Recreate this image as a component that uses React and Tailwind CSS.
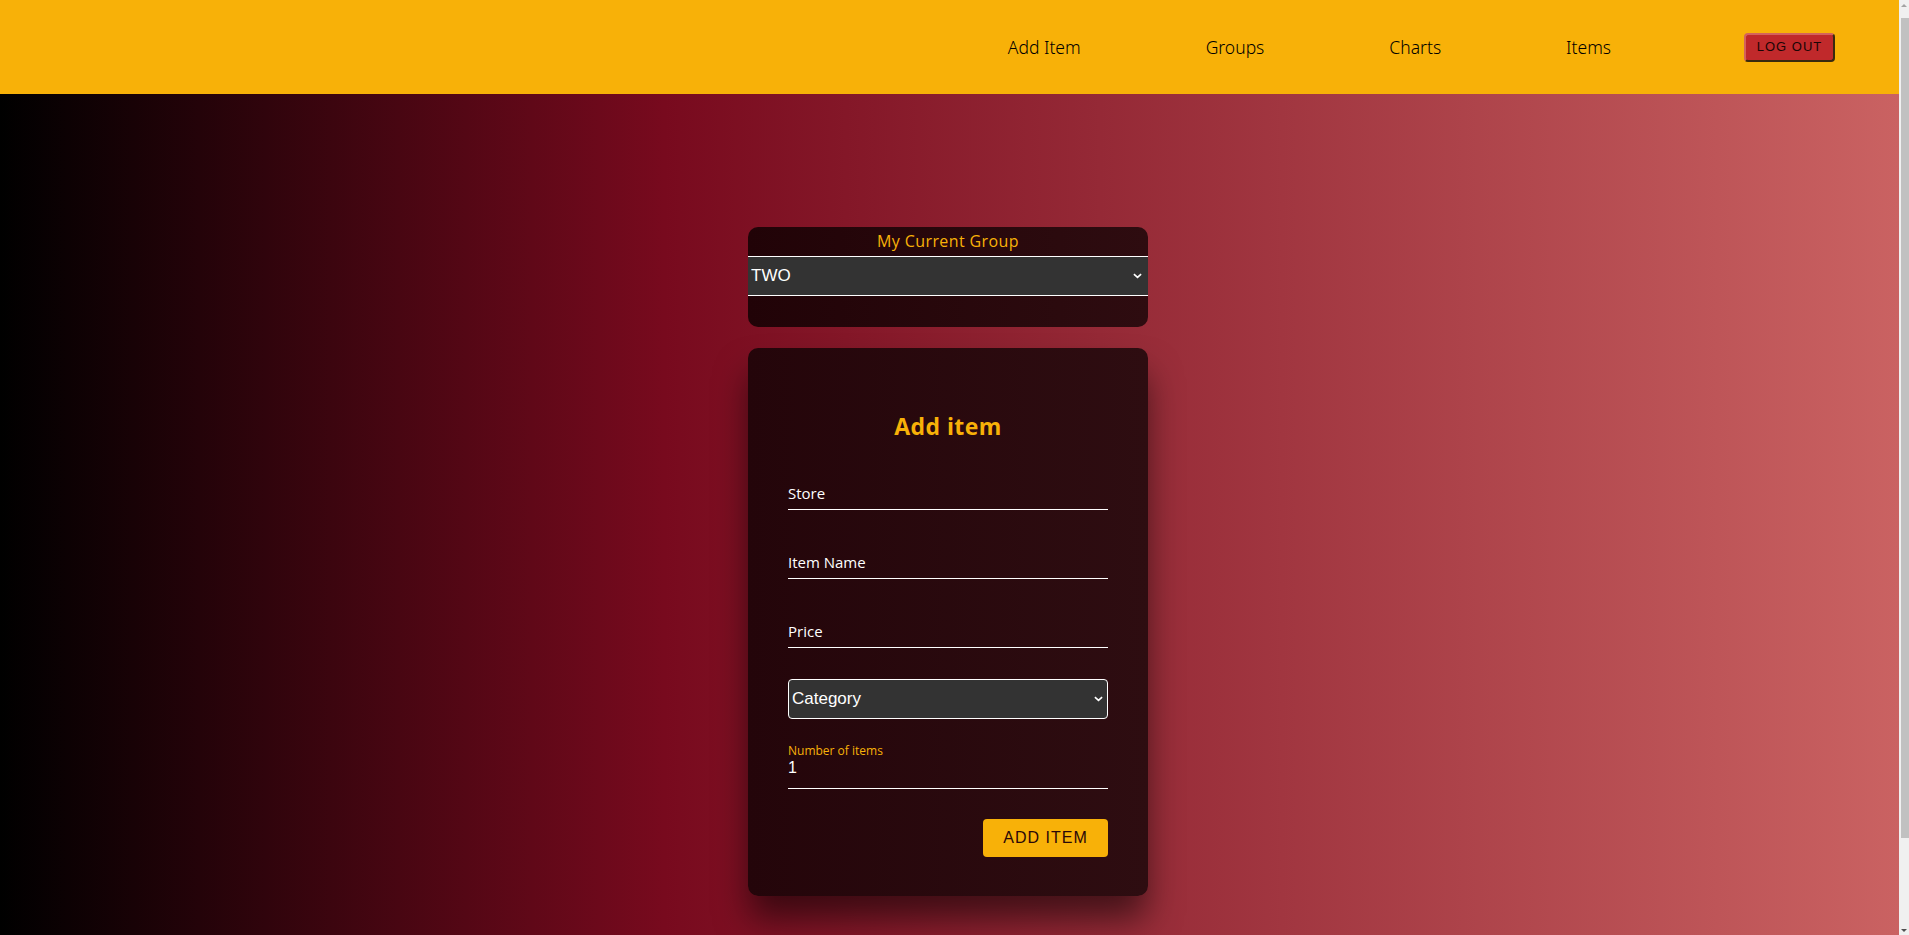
import { useState } from 'react';

const navLinks = ['Add Item', 'Groups', 'Charts', 'Items'];

function Chevron({ className }) {
  return (
    <svg viewBox="0 0 10 6" className={className} fill="none" stroke="currentColor" strokeWidth="1.8">
      <path d="M1 1l4 3.6L9 1" />
    </svg>
  );
}

function LineInput({ placeholder }) {
  return (
    <input
      placeholder={placeholder}
      className="block h-[34px] w-full border-b border-white bg-transparent text-[15px] text-white outline-none placeholder:text-white"
    />
  );
}

export default function App() {
  const [group, setGroup] = useState('TWO');
  const [count, setCount] = useState('1');

  return (
    <div className="flex h-screen overflow-hidden font-['Open_Sans','Noto_Sans',sans-serif]">
      <div className="flex min-w-0 flex-1 flex-col bg-[linear-gradient(to_right,#000000_0%,#780a1e_35%,#ca6262_100%)]">
        <header className="flex h-[94px] shrink-0 items-center justify-end gap-[125px] bg-[#f8b108] pr-[64px]">
          {navLinks.map((link) => (
            <a key={link} href="#" className="pt-[1px] font-['Noto_Sans',sans-serif] text-[17.5px] font-light text-black">
              {link}
            </a>
          ))}
          <button className="ml-2 h-[29px] w-[91px] rounded-[4px] border-2 border-t-[#d4625c] border-l-[#d4625c] border-r-[#3a2a0e] border-b-[#3a2a0e] bg-[#c0292b] font-['Liberation_Sans',Arial,sans-serif] text-[13px] tracking-[1px] text-[#1a0505]">
            LOG OUT
          </button>
        </header>

        <main className="flex flex-col items-center pr-[3px]">
          <section className="mt-[133px] w-[400px] rounded-[10px] bg-[linear-gradient(to_right,#210307,#2e0c10)] pb-[31px]">
            <h2 className="h-[29px] text-center text-[16px] leading-[29px] tracking-[0.4px] text-[#f8b108]">
              My Current Group
            </h2>
            <div className="relative">
              <select
                value={group}
                onChange={(e) => setGroup(e.target.value)}
                className="block h-[40px] w-full appearance-none border-y border-white bg-[#333333] pl-[3px] font-['Liberation_Sans',Arial,sans-serif] text-[17px] text-white outline-none"
              >
                <option>ONE</option>
                <option>TWO</option>
              </select>
              <Chevron className="pointer-events-none absolute right-[6px] top-[17px] h-[6px] w-[9px] text-white" />
            </div>
          </section>

          <section className="mt-[21px] h-[548px] w-[400px] rounded-[10px] bg-[linear-gradient(to_right,#24050a,#2e0d11)] px-10 pt-[63px] shadow-[0_24px_34px_-2px_rgba(0,0,0,0.55)]">
            <h1 className="text-center text-[23px] font-bold leading-[30px] tracking-[0.4px] text-[#f8b108]">Add item</h1>

            <div className="mt-[35px] flex flex-col gap-[35px]">
              <LineInput placeholder="Store" />
              <LineInput placeholder="Item Name" />
              <LineInput placeholder="Price" />
            </div>

            <div className="relative mt-[31px]">
              <select className="block h-[40px] w-full appearance-none rounded-[4px] border border-white bg-[#333333] pl-[3px] font-['Liberation_Sans',Arial,sans-serif] text-[17px] text-white outline-none">
                <option>Category</option>
              </select>
              <Chevron className="pointer-events-none absolute right-[5px] top-[17px] h-[6px] w-[9px] text-white" />
            </div>

            <label className="mt-[25px] block border-b border-white pb-[10px]">
              <span className="block text-[12px] leading-[14px] text-[#f8b108]">Number of items</span>
              <input
                value={count}
                onChange={(e) => setCount(e.target.value)}
                className="block h-[20px] w-full bg-transparent font-['Liberation_Sans',Arial,sans-serif] text-[16px] text-white outline-none"
              />
            </label>

            <div className="mt-[30px] flex justify-end">
              <button className="h-[38px] w-[125px] rounded-[4px] bg-[#f8b108] font-['Liberation_Sans',Arial,sans-serif] text-[16px] tracking-[1px] text-[#2a0808]">
                ADD ITEM
              </button>
            </div>
          </section>
        </main>
      </div>

      <div className="flex w-[10px] shrink-0 flex-col bg-[#f0f0f0]">
        <div className="flex h-[10px] items-center justify-center">
          <div className="h-0 w-0 border-x-[3px] border-b-[3px] border-x-transparent border-b-[#a3a3a3]" />
        </div>
        <div className="ml-[2px] mt-[8px] h-[820px] w-[8px] bg-[#c1c1c1]" />
        <div className="mt-auto flex h-[10px] items-center justify-center">
          <div className="h-0 w-0 border-x-[3px] border-t-[3px] border-x-transparent border-t-[#505050]" />
        </div>
      </div>
    </div>
  );
}
